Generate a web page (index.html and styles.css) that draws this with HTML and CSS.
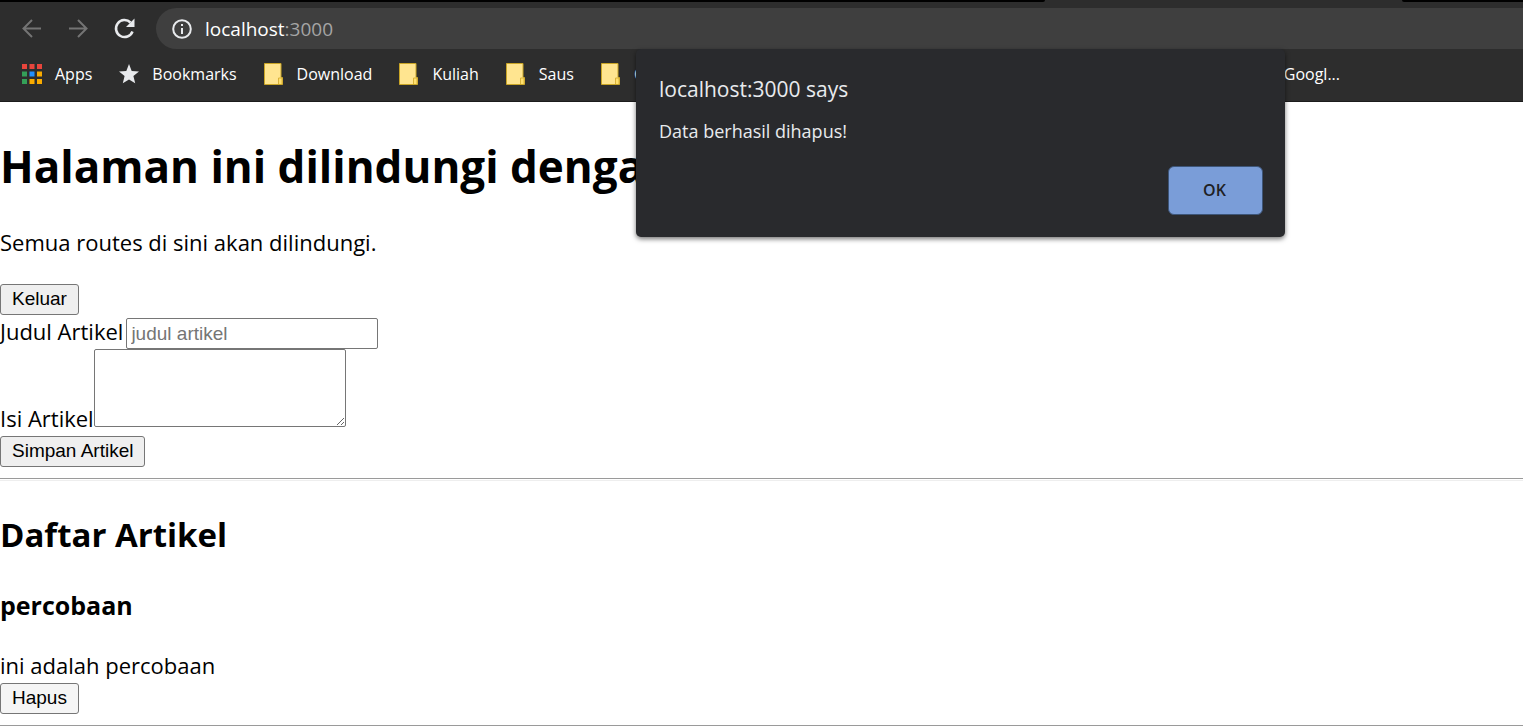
FILE: index.html
```html
<!DOCTYPE html>
<html lang="id">
<head>
<meta charset="utf-8">
<meta name="viewport" content="width=device-width, initial-scale=1">
<title>localhost:3000</title>
<link rel="stylesheet" href="styles.css">
</head>
<body>
<svg class="sprite" aria-hidden="true">
  <symbol id="folder" viewBox="0 0 20 22">
    <path d="M.5.5h16.500v14h1.500v7H.5z" fill="#ffe590" stroke="#c9a526"/>
    <path d="M14.500 21v-6h3.500v6" fill="#ffe06e" stroke="#d9b23a"/>
  </symbol>
</svg>
<header class="browser">
  <div class="tabstrip"><span class="tab-edge tab-edge-left"></span><span class="tab-edge tab-edge-right"></span></div>
  <div class="toolbar">
    <nav class="nav" aria-label="Navigasi">
      <button class="nav-button dim" aria-label="Back"><svg viewBox="0 0 24 24"><path d="M21 11.500H3.500M12 3l-8.500 8.500L12 20"/></svg></button>
      <button class="nav-button dim" aria-label="Forward"><svg viewBox="0 0 24 24"><path d="M3 11.500h17.500M12 3l8.500 8.500L12 20"/></svg></button>
      <button class="nav-button" aria-label="Reload"><svg viewBox="0 0 24 24"><path class="thick" d="M20.500 14.500A8.500 8.500 0 1 1 18.500 5.500"/><path class="solid" d="M22.500 1.500v8.500H14z"/></svg></button>
    </nav>
    <div class="address">
      <svg class="info" viewBox="0 0 20 20"><circle cx="10" cy="10" r="8.800"/><path d="M10 9v6M10 5v2"/></svg>
      <span><span class="host">localhost</span>:3000</span>
    </div>
  </div>
  <nav class="bookmarks" aria-label="Bookmarks">
    <a class="bookmark" href="#apps"><svg viewBox="0 0 20 22"><g fill="#e8453c"><path d="M0 1h5v5H0zM7.500 1h5v5h-5zM15 1h5v5h-5z"/></g><path fill="#34a058" d="M0 8.500h5v5H0zM0 16h5v5H0z"/><path fill="#2290ff" d="M7.500 8.500h5v5h-5z"/><path fill="#f9ab00" d="M15 8.500h5v5h-5zM7.500 16h5v5h-5zM15 16h5v5h-5z"/></svg>Apps</a>
    <a class="bookmark" href="#bookmarks"><svg viewBox="0 0 20 22"><path fill="#e8eaed" d="M10 1l2.700 6.900 7.300.5-5.600 4.700 1.800 7.200L10 16.400l-6.200 3.900 1.800-7.200L0 8.400l7.300-.5z"/></svg>Bookmarks</a>
    <a class="bookmark" href="#download"><svg><use href="#folder"/></svg>Download</a>
    <a class="bookmark" href="#kuliah"><svg><use href="#folder"/></svg>Kuliah</a>
    <a class="bookmark" href="#saus"><svg><use href="#folder"/></svg>Saus</a>
    <a class="bookmark" href="#c"><svg><use href="#folder"/></svg>C</a>
    <a class="bookmark last" href="#google">Googl...</a>
  </nav>
</header>

<main class="page">
  <h1>Halaman ini dilindungi dengan</h1>
  <p class="intro">Semua routes di sini akan dilindungi.</p>
  <button class="btn" type="button">Keluar</button>
  <form class="form">
    <div class="field title-field"><label for="judul">Judul Artikel</label><input id="judul" type="text" placeholder="judul artikel"></div>
    <div class="field body-field"><label for="isi">Isi Artikel</label><textarea id="isi"></textarea></div>
    <button class="btn" type="button">Simpan Artikel</button>
  </form>
  <hr>
  <h2>Daftar Artikel</h2>
  <article>
    <h3>percobaan</h3>
    <p>ini adalah percobaan</p>
    <button class="btn light" type="button">Hapus</button>
  </article>
  <hr>
</main>

<div class="dialog" role="alertdialog" aria-labelledby="dialog-title" aria-describedby="dialog-text">
  <div class="dialog-title" id="dialog-title">localhost:3000 says</div>
  <div class="dialog-text" id="dialog-text">Data berhasil dihapus!</div>
  <button class="ok" type="button">OK</button>
</div>
</body>
</html>
```

FILE: styles.css
```css
* { box-sizing: border-box; }

body {
  margin: 0;
  background: #fff;
  color: #000;
  font-family: "Open Sans", "Noto Sans", sans-serif;
  font-size: 22px;
  line-height: 30px;
  overflow: hidden;
}

.sprite { display: none; }

.browser {
  background: #2d2d2d;
  border-bottom: 1px solid #1c1c1c;
}

.tabstrip {
  display: flex;
  justify-content: space-between;
  height: 2px;
}
.tab-edge { background: #000; }
.tab-edge-left { width: 1045px; border-bottom-right-radius: 4px; }
.tab-edge-right { width: 121px; border-bottom-left-radius: 4px; }

.toolbar {
  display: flex;
  align-items: center;
  gap: 20px;
  padding: 6px 0 0 20px;
}
.nav { display: flex; gap: 22px; }
.nav-button {
  width: 24px;
  height: 24px;
  padding: 0;
  border: 0;
  background: none;
  color: #e8eaed;
}
.nav-button svg {
  display: block;
  width: 24px;
  height: 24px;
  fill: none;
  stroke: currentColor;
  stroke-width: 2;
}
.nav-button .thick { stroke-width: 2.500; }
.nav-button .solid { fill: currentColor; stroke: none; }
.nav-button.dim { color: #747474; }

.address {
  display: flex;
  flex: 1;
  align-items: center;
  gap: 13px;
  height: 41px;
  padding-left: 16px;
  border-radius: 21px 0 0 21px;
  background: #3f3f3f;
  color: #a5a5a5;
  font-size: 19px;
}
.host { color: #fff; }
.info {
  width: 20px;
  height: 20px;
  fill: none;
  stroke: #e8eaed;
  stroke-width: 2;
}

.bookmarks {
  display: flex;
  align-items: center;
  gap: 27px;
  height: 52px;
  padding: 0 183px 2px 22px;
  font-size: 16px;
}
.bookmark {
  display: flex;
  align-items: center;
  gap: 13px;
  color: #fff;
  text-decoration: none;
}
.bookmark svg { width: 20px; height: 22px; }
.last { margin-left: auto; }

.page { padding-top: 34px; }

h1, h2, h3, p, hr { margin: 0; }
h1 { font-size: 44px; line-height: 60px; white-space: nowrap; }
h2 { margin-top: 30px; font-size: 33px; line-height: 48px; }
h3 { margin-top: 28px; font-size: 25px; line-height: 36px; }
article p { margin-top: 27px; }
.intro { margin: 31px 0 27px; }

hr {
  height: 3px;
  margin-top: 11px;
  border: 0;
  border-top: 1px solid #9a9a9a;
  border-bottom: 1px solid #eee;
}

.btn {
  display: block;
  height: 31px;
  padding: 0 11px 2px;
  border: 1px solid #767676;
  border-radius: 3px;
  background: #efefef;
  color: #000;
  font: 19px/27px "Liberation Sans", Arial, sans-serif;
}
.light { margin-top: 3px; background: #f5f5f5; }

.form { margin-top: 3px; }
.field { display: flex; }
.title-field { align-items: flex-start; }
.title-field label { padding-right: 3px; line-height: 26px; }
.body-field { align-items: flex-end; margin-bottom: 9px; }

input, textarea {
  width: 252px;
  padding: 1px 4px;
  border: 1px solid #767676;
  border-radius: 2px;
  background: #fff;
  font: 19px/24px "Liberation Sans", Arial, sans-serif;
}
input { height: 31px; }
input::placeholder { color: #757575; }
textarea { height: 78px; }
.body-field label { margin-bottom: -6px; }

.dialog {
  position: absolute;
  top: 49px;
  left: 636px;
  display: flex;
  flex-direction: column;
  width: 649px;
  padding: 25px 22px 22px 23px;
  border-radius: 5px;
  background: #292a2d;
  box-shadow: 0 2px 5px rgba(0, 0, 0, 0.55);
  color: #e8eaed;
}
.dialog-title { font-size: 21px; line-height: 30px; }
.dialog-text { margin-top: 14px; font-size: 18px; line-height: 26px; }
.ok {
  align-self: flex-end;
  width: 95px;
  height: 49px;
  margin-top: 22px;
  padding: 0 8px 2px 6px;
  border: 1px solid #3d5578;
  border-radius: 6px;
  background: #7a9dd8;
  color: #202124;
  font: 600 16px/24px "Open Sans", "Noto Sans", sans-serif;
}
```
